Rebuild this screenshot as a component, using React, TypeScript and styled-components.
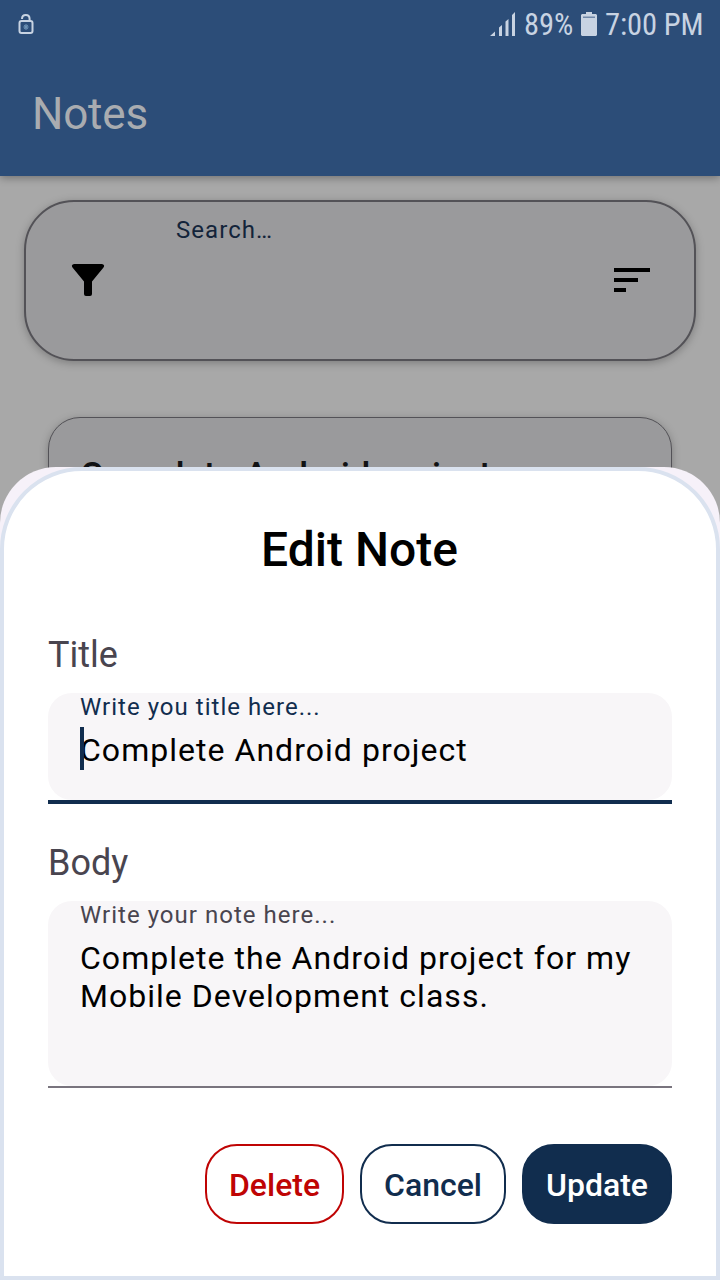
import React from "react";
import styled, { createGlobalStyle } from "styled-components";

const navy = "#112d4e";
const danger = "#bf0404";

const GlobalStyle = createGlobalStyle`
  * { box-sizing: border-box; }
  body { margin: 0; font-family: Roboto, "Liberation Sans", sans-serif; }
`;

const Screen = styled.div`
  position: relative;
  width: 720px;
  height: 1280px;
  overflow: hidden;
  background: #a8a8a8;
`;

const Header = styled.header`
  height: 176px;
  background: #2c4d78;
  box-shadow: 0 2px 8px rgba(0, 0, 0, 0.32);
`;

const StatusBar = styled.div`
  display: flex;
  justify-content: space-between;
  align-items: flex-start;
  height: 48px;
  padding: 0 17px 0 18px;
  color: #c8d3e2;
`;

const StatusGroup = styled.div`
  display: flex;
  align-items: flex-start;
`;

const StatusText = styled.span<{ $width: number; $gap: number }>`
  width: ${(p) => p.$width}px;
  margin-left: ${(p) => p.$gap}px;
  font-family: "Roboto Condensed", Roboto, sans-serif;
  font-stretch: 75%;
  font-size: 30.5px;
  line-height: 50px;
  letter-spacing: -0.1px;
  white-space: nowrap;
`;

const StatusIcon = styled.svg<{ $top: number; $gap?: number }>`
  display: block;
  margin-top: ${(p) => p.$top}px;
  margin-left: ${(p) => p.$gap ?? 0}px;
`;

const AppTitle = styled.h1`
  margin: 0;
  padding: 40px 0 0 32px;
  font-size: 44px;
  font-weight: 400;
  line-height: 52px;
  letter-spacing: -0.2px;
  color: #a9acb0;
`;

const Content = styled.main`
  padding: 24px 24px 0;
`;

const SearchCard = styled.div`
  display: flex;
  justify-content: space-between;
  height: 161px;
  padding: 0 43px 0 45px;
  border: 2px solid #535257;
  border-radius: 50px;
  background: #9a9a9c;
  box-shadow: 0 2px 8px rgba(0, 0, 0, 0.26);
`;

const SearchLabel = styled.span`
  flex: 1;
  margin: 14px 0 0 71px;
  font-size: 24px;
  line-height: 28px;
  letter-spacing: 1.05px;
  color: #13243a;
`;

const CardIcon = styled.svg`
  display: block;
  margin-top: 61px;
`;

const NoteCard = styled.article`
  height: 240px;
  margin: 56px 24px 0;
  padding: 36px 31px;
  border: 1px solid #535257;
  border-radius: 32px;
  background: #9a9a9c;
  box-shadow: 0 2px 8px rgba(0, 0, 0, 0.26);
`;

const NoteTitle = styled.h2`
  margin: 0;
  font-size: 36px;
  font-weight: 500;
  line-height: 44px;
  color: #111214;
`;

const Sheet = styled.section`
  position: absolute;
  inset: 467px 0 0;
  border-radius: 56px 56px 0 0;
  background: #f6f1f9;
  overflow: hidden;
`;

const SheetPanel = styled.div`
  display: flex;
  flex-direction: column;
  height: 100%;
  padding: 51px 44px 0;
  border: 4px solid #dae2ef;
  border-radius: 82px 82px 0 0;
  background: #fff;
`;

const SheetTitle = styled.h2`
  margin: 0 1px 56px 0;
  font-size: 48px;
  font-weight: 500;
  line-height: 56px;
  text-align: center;
  color: #000;
`;

const FieldLabel = styled.label`
  height: 42px;
  margin-bottom: 17px;
  font-size: 36px;
  line-height: 42px;
  color: #49454f;
`;

const Field = styled.div<{ $active?: boolean; $height: number; $after: number }>`
  display: flex;
  flex-direction: column;
  height: ${(p) => p.$height}px;
  margin-bottom: ${(p) => p.$after}px;
  border-bottom: ${(p) => (p.$active ? `4px solid ${navy}` : "2px solid #79747e")};
  color: ${(p) => (p.$active ? navy : "#49454f")};
`;

const FieldFill = styled.div`
  flex: 1;
  padding: 0 32px;
  border-radius: 24px;
  background: #f8f6f8;
`;

const Hint = styled.div`
  height: 28px;
  font-size: 24px;
  line-height: 28px;
  letter-spacing: 1.02px;
`;

const Value = styled.div`
  position: relative;
  margin-top: 10px;
  font-size: 32px;
  line-height: 38px;
  letter-spacing: 1.03px;
  white-space: pre;
  color: #000;
`;

const Caret = styled.span`
  position: absolute;
  left: 0;
  top: -4px;
  width: 4px;
  height: 43px;
  background: ${navy};
`;

const Actions = styled.div`
  display: flex;
  justify-content: flex-end;
  gap: 16px;
`;

const ActionButton = styled.button<{ $tone: string; $filled?: boolean; $width: number }>`
  width: ${(p) => p.$width}px;
  height: 80px;
  padding: 2px 0 0;
  border: 2px solid ${(p) => p.$tone};
  border-radius: 32px;
  background: ${(p) => (p.$filled ? p.$tone : "#fff")};
  color: ${(p) => (p.$filled ? "#fff" : p.$tone)};
  font: 500 32px/38px Roboto, "Liberation Sans", sans-serif;
  white-space: nowrap;
`;

export default function App() {
  return (
    <>
      <GlobalStyle />
      <Screen>
        <Header>
          <StatusBar>
            <StatusIcon $top={13} width="16" height="22" viewBox="0 0 16 22" fill="none">
              <path d="M4 6C4 0.8 11.6 0.8 11.6 6V8" stroke="currentColor" strokeWidth="2" />
              <rect x="1.5" y="8" width="13" height="12" rx="2" stroke="currentColor" strokeWidth="2" />
              <path d="M8 11v6M5.3 14h5.4M6.2 12.2l3.6 3.6M9.8 12.2l-3.6 3.6" stroke="#6d91b4" strokeWidth="1.1" />
            </StatusIcon>
            <StatusGroup>
              <StatusIcon $top={12} width="25" height="24" viewBox="0 0 25 24" fill="currentColor">
                <path d="M0 24L5 19.5V24ZM9 24V15.5L12 13V24ZM15.5 24V9.5L18.5 7V24ZM22 24V3L25 0V24Z" />
              </StatusIcon>
              <StatusText $width={49} $gap={9}>89%</StatusText>
              <StatusIcon $top={12} $gap={8} width="16" height="24" viewBox="0 0 16 24">
                <path d="M5 0H11V2H15L16 3V23L15 24H1L0 23V3L1 2H5Z" fill="currentColor" />
                <path d="M2 5.2H14" stroke="#58749a" strokeWidth="1.2" />
              </StatusIcon>
              <StatusText $width={98} $gap={8}>7:00 PM</StatusText>
            </StatusGroup>
          </StatusBar>
          <AppTitle>Notes</AppTitle>
        </Header>

        <Content>
          <SearchCard>
            <CardIcon width="34" height="34" viewBox="0 0 34 34">
              <path d="M3 1H31Q34.5 1.8 32.3 4.8L21 18.5V31Q21 33 19 33H15Q13 33 13 31V18.5L1.7 4.8Q-.5 1.8 3 1Z" />
            </CardIcon>
            <SearchLabel>Search…</SearchLabel>
            <CardIcon width="37" height="34" viewBox="0 0 37 34">
              <path d="M0 5H36V9H0ZM0 15H24V19H0ZM0 25H12V29H0Z" />
            </CardIcon>
          </SearchCard>
          <NoteCard>
            <NoteTitle>Complete Android project</NoteTitle>
          </NoteCard>
        </Content>

        <Sheet role="dialog">
          <SheetPanel>
            <SheetTitle>Edit Note</SheetTitle>
            <FieldLabel>Title</FieldLabel>
            <Field $active $height={111} $after={38}>
              <FieldFill>
                <Hint>Write you title here...</Hint>
                <Value>
                  <Caret />
                  Complete Android project
                </Value>
              </FieldFill>
            </Field>
            <FieldLabel>Body</FieldLabel>
            <Field $height={187} $after={56}>
              <FieldFill>
                <Hint>Write your note here...</Hint>
                <Value>{"Complete the Android project for my\nMobile Development class."}</Value>
              </FieldFill>
            </Field>
            <Actions>
              <ActionButton $tone={danger} $width={139}>Delete</ActionButton>
              <ActionButton $tone={navy} $width={146}>Cancel</ActionButton>
              <ActionButton $tone={navy} $filled $width={150}>Update</ActionButton>
            </Actions>
          </SheetPanel>
        </Sheet>
      </Screen>
    </>
  );
}
